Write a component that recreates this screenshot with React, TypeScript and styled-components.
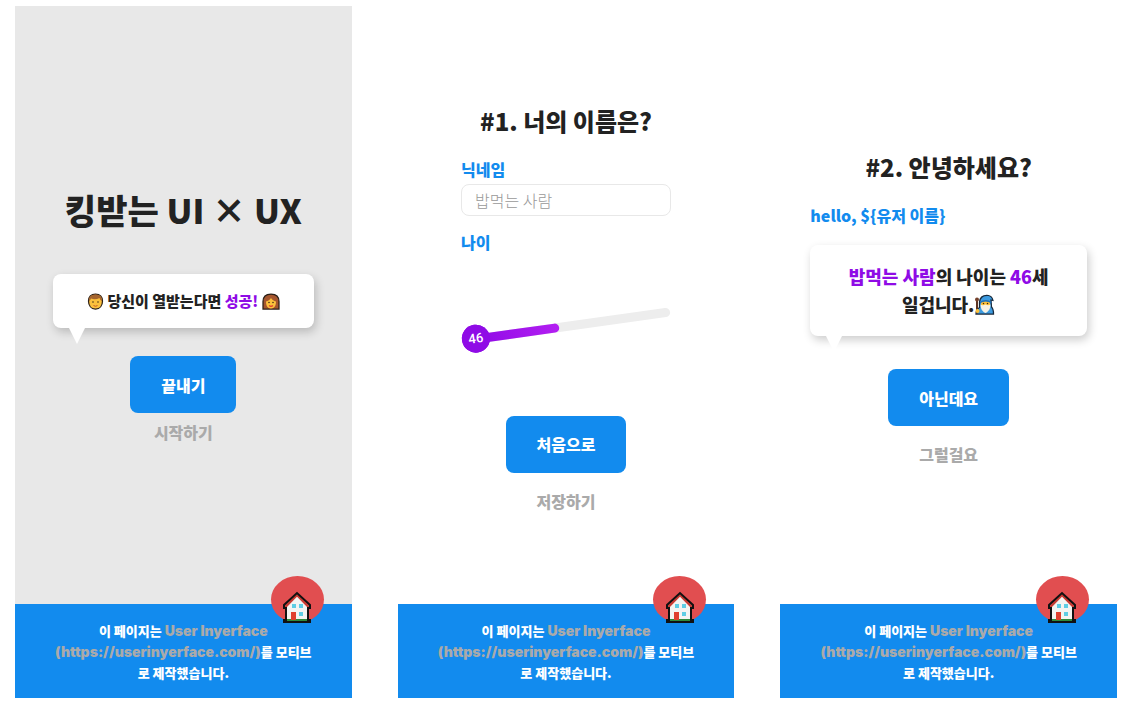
import React, { useState } from 'react';
import styled, { createGlobalStyle } from 'styled-components';

const display = '"Noto Sans CJK KR", "Noto Sans", sans-serif';

const GlobalStyle = createGlobalStyle`
  * { box-sizing: border-box; }
  body { margin: 0; background: #fff; color: #222; font: 900 16px/24px ${display}; }
  button, input { font: inherit; }
`;

const Page = styled.main`
  display: grid;
  grid-template-columns: repeat(3, 1fr);
  gap: 46px;
  min-height: 100vh;
  padding: 6px 7px 9px 15px;
`;

const Screen = styled.section<{ $shaded?: boolean }>`
  display: flex;
  flex-direction: column;
  background: ${p => (p.$shaded ? '#e8e8e8' : '#fff')};
`;

const Body = styled.div<{ $side: number; $top: number }>`
  flex: 1;
  display: flex;
  flex-direction: column;
  align-items: center;
  justify-content: center;
  padding: ${p => p.$top}px ${p => p.$side}px 0;
`;

const HeroTitle = styled.h1`
  margin: 0 0 40px;
  font-size: 34px;
  line-height: 48px;
  font-weight: 900;
  white-space: nowrap;
`;

const Title = styled.h2`
  margin: 0 0 18px;
  font-size: 24px;
  line-height: 36px;
  font-weight: 900;
  white-space: nowrap;
`;

const Form = styled.form`
  display: flex;
  flex-direction: column;
  width: 210px;
`;

const Label = styled.label`
  color: #128bee;
`;

const Greeting = styled.p`
  align-self: stretch;
  margin: 0 0 18px;
  color: #128bee;
`;

const NameInput = styled.input`
  height: 32px;
  margin: 3px 0 14px;
  padding: 0 13px;
  border: 1px solid #e8e8e8;
  border-radius: 8px;
  background: #fff;
  outline: none;
  font-weight: 300;
  &::placeholder { color: #999; opacity: 1; }
`;

const Slider = styled.div`
  position: relative;
  height: 28px;
  margin: 58px 0 76px;
  transform: rotate(-8deg);
`;

const Range = styled.input`
  appearance: none;
  display: block;
  width: 100%;
  height: 28px;
  margin: 0;
  background: transparent;
  &::-webkit-slider-runnable-track {
    height: 9px;
    border-radius: 5px;
    background: #ededed;
  }
  &::-webkit-slider-thumb {
    appearance: none;
    width: 28px;
    height: 28px;
    margin-top: -10px;
    border-radius: 50%;
    background: #8f0be6;
  }
`;

const Fill = styled.div`
  position: absolute;
  top: 10px;
  left: 14px;
  height: 9px;
  border-radius: 5px;
  background: linear-gradient(90deg, #8f0be6, #b41ff2);
  pointer-events: none;
`;

const Knob = styled.output`
  position: absolute;
  top: 0;
  left: 0;
  width: 28px;
  height: 28px;
  border-radius: 50%;
  background: #8f0be6;
  color: #fff;
  font: 500 13px/28px Roboto, sans-serif;
  text-align: center;
  pointer-events: none;
`;

const Bubble = styled.div<{ $large?: boolean }>`
  position: relative;
  align-self: stretch;
  margin-bottom: ${p => (p.$large ? 33 : 28)}px;
  padding: ${p => (p.$large ? '17px 16px 18px' : '15px 16px')};
  border-radius: 8px;
  background: #fff;
  box-shadow: 2px 4px 10px rgba(0, 0, 0, 0.2);
  font-size: ${p => (p.$large ? 18 : 15)}px;
  line-height: ${p => (p.$large ? 28 : 24)}px;
  text-align: center;
  white-space: nowrap;
  &::after {
    content: '';
    position: absolute;
    top: 100%;
    left: 16px;
    border: solid transparent;
    border-width: 16px 8px 0;
    border-top-color: #fff;
  }
`;

const Accent = styled.span`
  color: #8f0be6;
`;

const PrimaryButton = styled.button<{ $gap: number }>`
  height: 57px;
  margin-bottom: ${p => p.$gap}px;
  padding: 0 31px;
  border: 0;
  border-radius: 8px;
  background: #128bee;
  color: #fff;
  cursor: pointer;
`;

const TextButton = styled.button`
  padding: 0;
  border: 0;
  background: none;
  color: #aaa;
  cursor: pointer;
`;

const Footer = styled.footer`
  position: relative;
  padding: 16px 0 15px;
  background: #128bee;
  color: #fff;
  font-size: 13px;
  line-height: 21px;
  text-align: center;
  white-space: nowrap;
`;

const FooterLink = styled.a`
  color: #aaa;
  font-family: Inter, ${display};
  font-size: 14px;
  text-decoration: none;
`;

const HomeButton = styled.button`
  position: absolute;
  top: -28px;
  right: 28px;
  display: flex;
  align-items: flex-end;
  justify-content: center;
  width: 53px;
  height: 47px;
  padding: 0;
  border: 0;
  border-radius: 50%;
  background: #e14e50;
  cursor: pointer;
`;

const Emoji = styled.svg`
  vertical-align: -3px;
`;

const House = () => (
  <svg width="30" height="32" viewBox="0 0 30 32" aria-hidden="true">
    <path d="M4 16h22v15H4z" fill="#f4f4f2" />
    <path d="M4 16 15 4l11 12v3H4z" fill="#f4f4f2" />
    <path d="M3.5 16 15 4.2 26.500 16" fill="none" stroke="#c93a32" strokeWidth="2" />
    <path d="M2 28h26v3H2z" fill="#2f8a3c" />
    <path d="M4 29V17H2v-3L15 2l13 12v3h-2v12h2v2H2v-2z" fill="none" stroke="#111" strokeWidth="2" />
    <path d="M10 13h4v4h-4zm7 0h4v4h-4zm0 8h4v4h-4z" fill="#5fcde4" />
    <path d="M9 21h5v8H9z" fill="#e0402f" />
  </svg>
);

const Man = () => (
  <Emoji width="17" height="17" viewBox="0 0 34 34" role="img" aria-label="남자">
    <path d="M17 2C8 2 3 8 3 16c0 9 5 16 14 16s14-7 14-16C31 8 26 2 17 2z" fill="#fcc13c" stroke="#2b2019" strokeWidth="2.5" />
    <path d="M4 16C3 7 9 3 17 3s14 4 13 13c-3-1-4-3-5-6-6 3-12 3-17 1-1 2-2 4-4 5z" fill="#a5652e" />
    <circle cx="12" cy="18" r="1.5" fill="#33230f" />
    <circle cx="22" cy="18" r="1.500" fill="#33230f" />
    <path d="M13 25q4 3 8 0" fill="none" stroke="#c85b28" strokeWidth="2" />
  </Emoji>
);

const Woman = () => (
  <Emoji width="18" height="17" viewBox="0 0 36 34" role="img" aria-label="여자">
    <path d="M2 32V17C2 7 8 2 18 2s16 5 16 15v15z" fill="#a5562e" stroke="#2b2019" strokeWidth="2.5" />
    <path d="M8 17c4-1 8-3 10-7 2 4 6 6 10 7 0 8-3 14-10 14S8 25 8 17z" fill="#fcc13c" />
    <circle cx="14" cy="19" r="1.500" fill="#33230f" />
    <circle cx="22" cy="19" r="1.500" fill="#33230f" />
    <path d="M14 25q4 3 8 0" fill="none" stroke="#e0402f" strokeWidth="2.500" />
  </Emoji>
);

const Wizard = () => (
  <Emoji width="21" height="21" viewBox="0 0 42 42" role="img" aria-label="마법사">
    <path d="M4 40c0-7 3-11 7-13V16C12 6 19 2 29 3c5 1 8 5 9 10l-4-1 1 14c3 3 4 8 4 14z" fill="#3d9be0" stroke="#17293c" strokeWidth="2.5" />
    <path d="M6 13v26" stroke="#5b3423" strokeWidth="4" />
    <circle cx="6" cy="11" r="4" fill="#74412b" />
    <path d="M14 17q9-5 18 0v8q-9 8-18 0z" fill="#fcc13c" />
    <path d="M13 21q5 3 10 0 5 3 10 0c0 9-4 14-10 17-6-3-10-8-10-17z" fill="#f6f2e4" />
    <path d="M12 17q11-7 23 0" fill="none" stroke="#1f6eb2" strokeWidth="2.500" />
    <circle cx="19" cy="19" r="1.500" fill="#33230f" />
    <circle cx="27" cy="19" r="1.500" fill="#33230f" />
    <circle cx="7" cy="34" r="4" fill="#fcc13c" />
  </Emoji>
);

const PageFooter = () => (
  <Footer>
    이 페이지는{' '}
    <FooterLink href="https://userinyerface.com/">
      User Inyerface
      <br />
      (https://userinyerface.com/)
    </FooterLink>
    를 모티브
    <br />
    로 제작했습니다.
    <HomeButton type="button" aria-label="홈">
      <House />
    </HomeButton>
  </Footer>
);

export default function App() {
  const [name, setName] = useState('');
  const [age, setAge] = useState(46);

  return (
    <>
      <GlobalStyle />
      <Page>
        <Screen $shaded>
          <Body $side={38} $top={20}>
            <HeroTitle>킹받는 UI × UX</HeroTitle>
            <Bubble>
              <Man /> 당신이 열받는다면 <Accent>성공!</Accent> <Woman />
            </Bubble>
            <PrimaryButton type="button" $gap={7}>끝내기</PrimaryButton>
            <TextButton type="button">시작하기</TextButton>
          </Body>
          <PageFooter />
        </Screen>

        <Screen>
          <Body $side={30} $top={5}>
            <Title>#1. 너의 이름은?</Title>
            <Form>
              <Label htmlFor="nickname">닉네임</Label>
              <NameInput
                id="nickname"
                placeholder="밥먹는 사람"
                value={name}
                onChange={e => setName(e.target.value)}
              />
              <Label htmlFor="age">나이</Label>
              <Slider>
                <Range
                  id="age"
                  type="range"
                  min={46}
                  max={100}
                  value={age}
                  onChange={e => setAge(Number(e.target.value))}
                />
                <Fill style={{ width: `${age - 6}%` }} />
                <Knob htmlFor="age">{age}</Knob>
              </Slider>
            </Form>
            <PrimaryButton type="button" $gap={16}>처음으로</PrimaryButton>
            <TextButton type="button">저장하기</TextButton>
          </Body>
          <PageFooter />
        </Screen>

        <Screen>
          <Body $side={30} $top={5}>
            <Title>#2. 안녕하세요?</Title>
            <Greeting>{'hello, ${유저 이름}'}</Greeting>
            <Bubble $large>
              <Accent>밥먹는 사람</Accent>의 나이는 <Accent>46</Accent>세
              <br />
              일겁니다.
              <Wizard />
            </Bubble>
            <PrimaryButton type="button" $gap={16}>아닌데요</PrimaryButton>
            <TextButton type="button">그럴걸요</TextButton>
          </Body>
          <PageFooter />
        </Screen>
      </Page>
    </>
  );
}
